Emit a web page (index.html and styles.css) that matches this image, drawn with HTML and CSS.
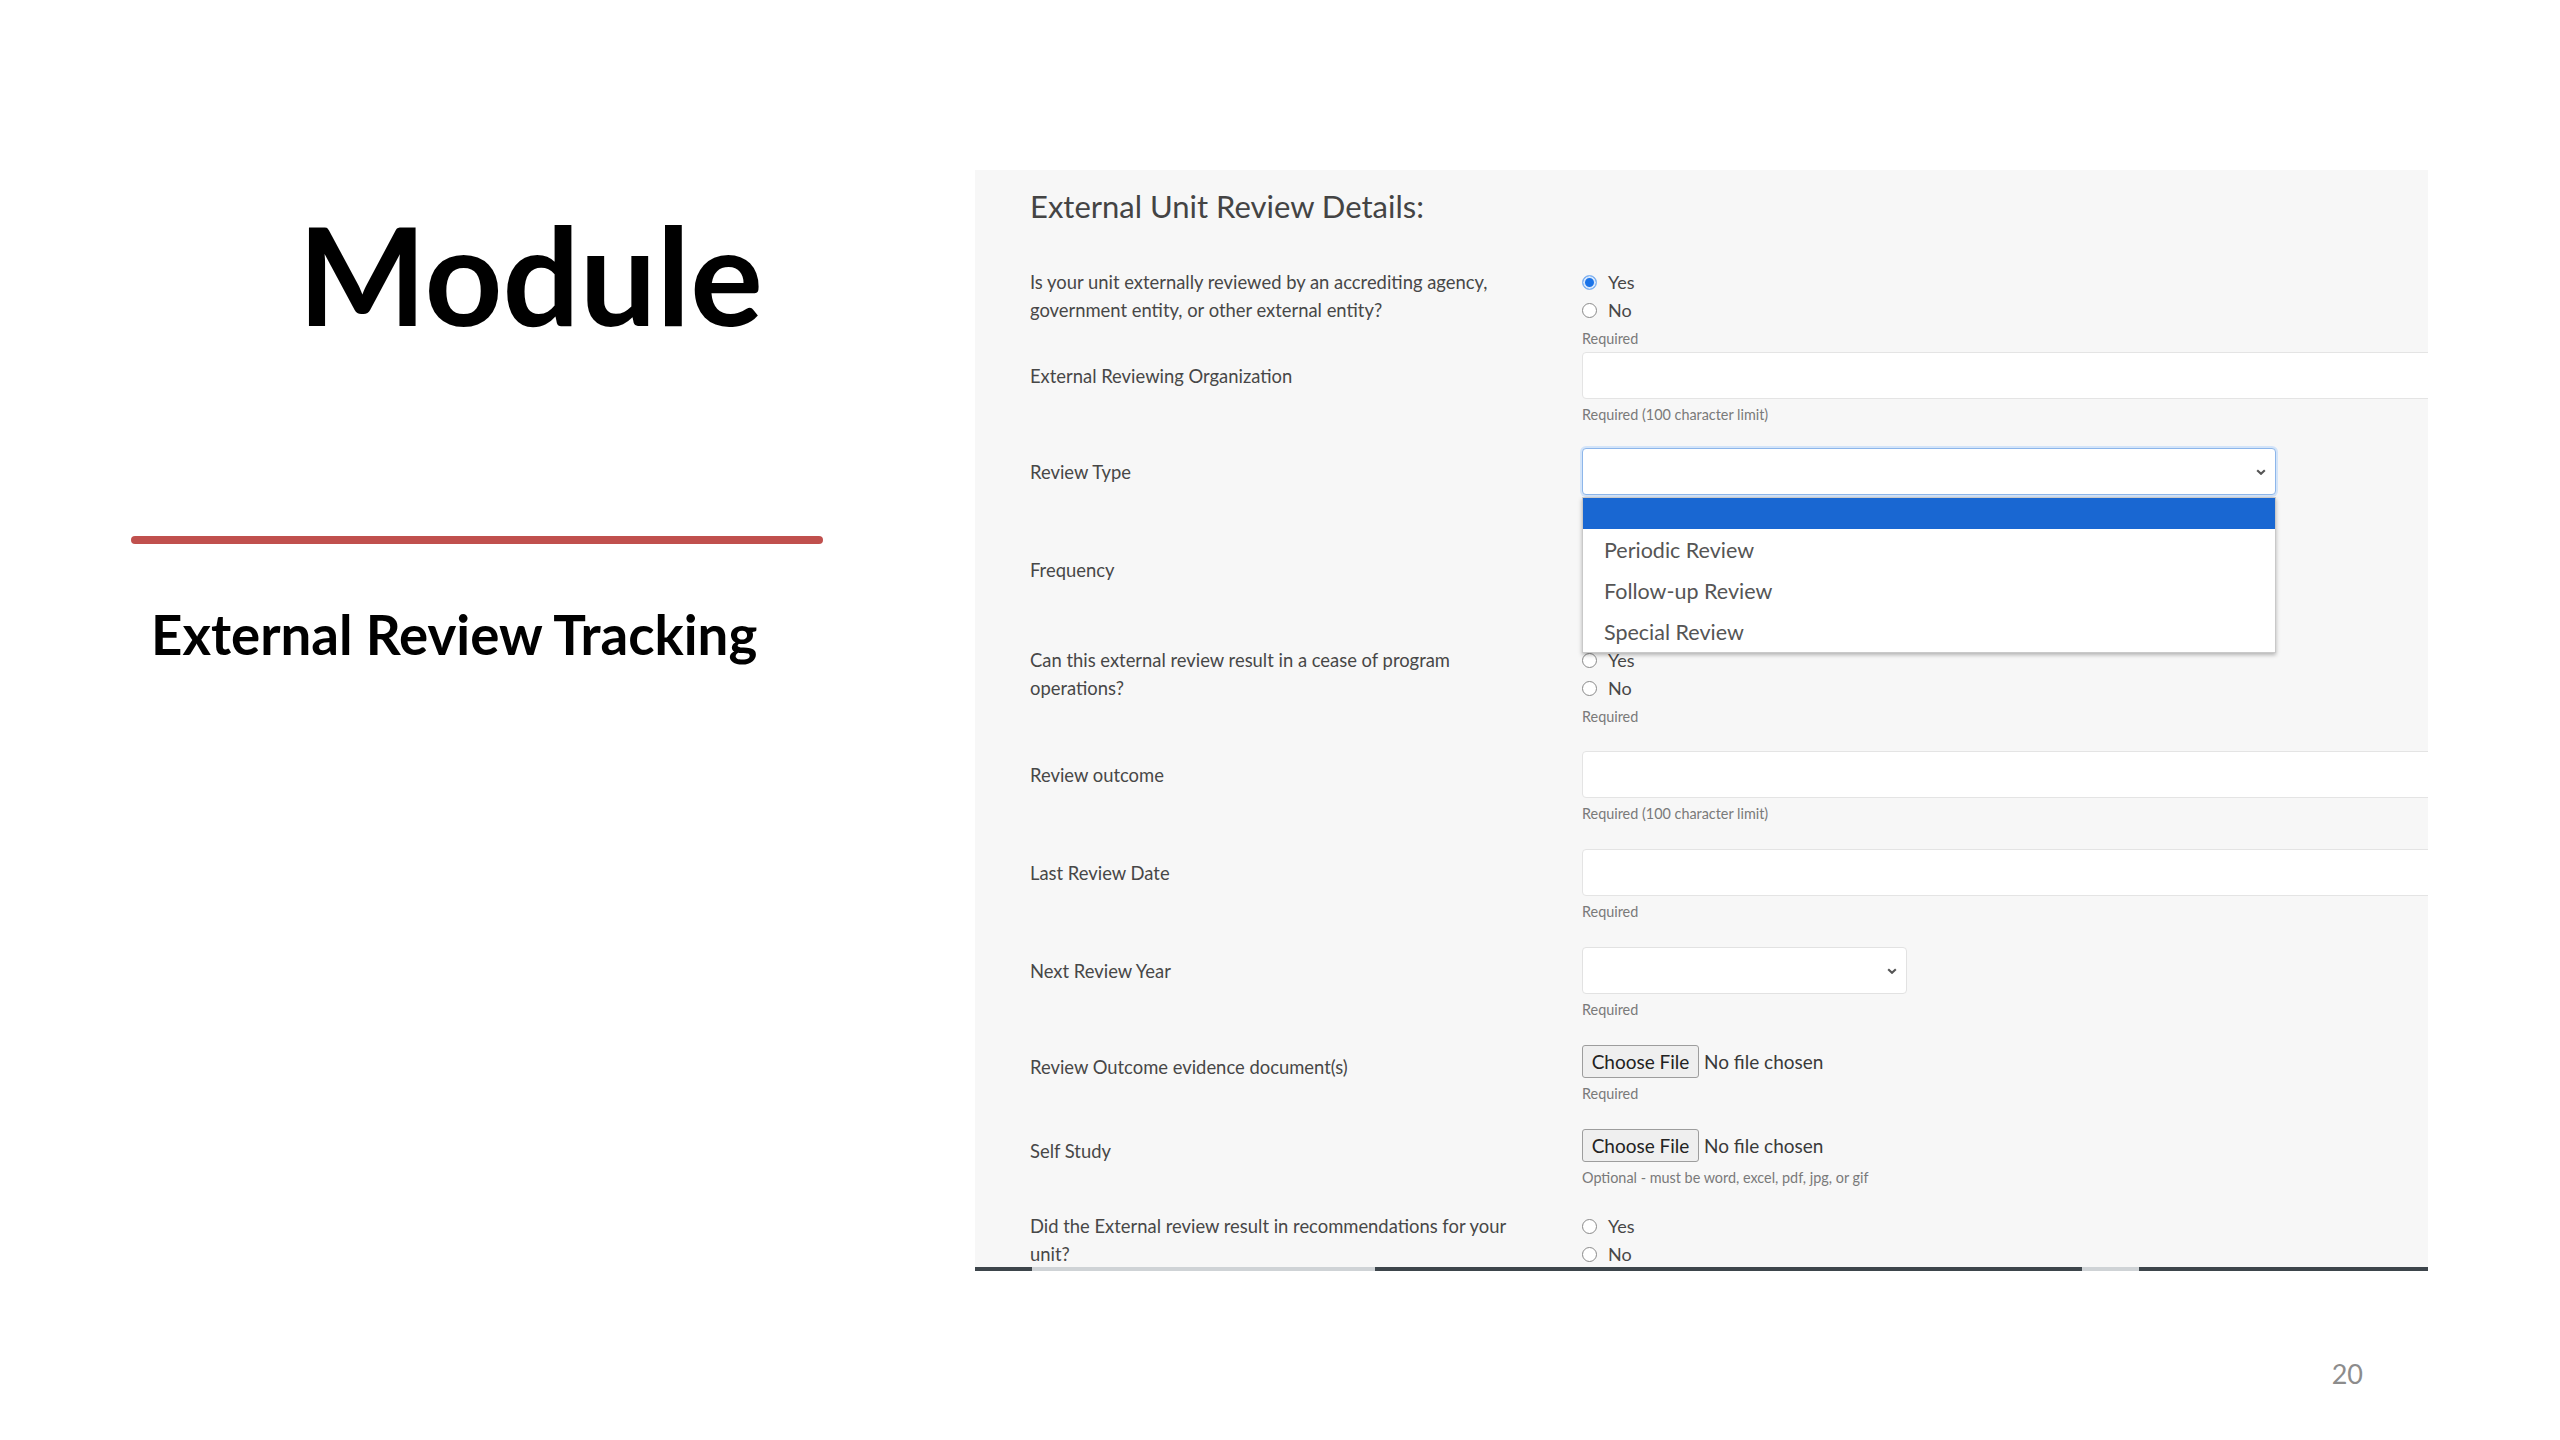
FILE: index.html
```html
<!DOCTYPE html>
<html lang="en">
<head>
<meta charset="utf-8">
<title>Module – External Review Tracking</title>
<link rel="stylesheet" href="styles.css">
</head>
<body>
<div class="slide">
  <div class="main">
    <section class="intro">
      <h1 class="module">Module</h1>
      <div class="rule"></div>
      <h2 class="subtitle">External Review Tracking</h2>
    </section>

    <section class="shot">
      <div class="panel">
        <h3 class="form-title">External Unit Review Details:</h3>

        <div class="row row-radio row-first">
          <div class="label">Is your unit externally reviewed by an accrediting agency,<br>government entity, or other external entity?</div>
          <div class="control">
            <div class="radio"><span class="dot on"></span>Yes</div>
            <div class="radio"><span class="dot"></span>No</div>
            <div class="hint hint-radio">Required</div>
          </div>
        </div>

        <div class="row row-org">
          <div class="label">External Reviewing Organization</div>
          <div class="control">
            <div class="input"></div>
            <div class="hint">Required (100 character limit)</div>
          </div>
        </div>

        <div class="row">
          <div class="label">Review Type</div>
          <div class="control">
            <div class="select focused">
              <svg class="chev" viewBox="0 0 10 6" width="10" height="6"><path d="M1.2 1.2l3.8 3.6 3.8-3.6" fill="none" stroke="#555" stroke-width="2.1"/></svg>
              <div class="dropdown">
                <div class="opt blank"></div>
                <div class="opt">Periodic Review</div>
                <div class="opt">Follow-up Review</div>
                <div class="opt">Special Review</div>
              </div>
            </div>
            <div class="hint">Required</div>
          </div>
        </div>

        <div class="row row-freq">
          <div class="label">Frequency</div>
          <div class="control">
            <div class="select">
              <svg class="chev" viewBox="0 0 10 6" width="10" height="6"><path d="M1.2 1.2l3.8 3.6 3.8-3.6" fill="none" stroke="#555" stroke-width="2.1"/></svg>
            </div>
            <div class="hint">Required</div>
          </div>
        </div>

        <div class="row row-radio">
          <div class="label">Can this external review result in a cease of program<br>operations?</div>
          <div class="control">
            <div class="radio"><span class="dot"></span>Yes</div>
            <div class="radio"><span class="dot"></span>No</div>
            <div class="hint hint-radio">Required</div>
          </div>
        </div>

        <div class="row">
          <div class="label">Review outcome</div>
          <div class="control">
            <div class="input"></div>
            <div class="hint">Required (100 character limit)</div>
          </div>
        </div>

        <div class="row">
          <div class="label">Last Review Date</div>
          <div class="control">
            <div class="input"></div>
            <div class="hint">Required</div>
          </div>
        </div>

        <div class="row">
          <div class="label">Next Review Year</div>
          <div class="control">
            <div class="select short">
              <svg class="chev" viewBox="0 0 10 6" width="10" height="6"><path d="M1.2 1.2l3.8 3.6 3.8-3.6" fill="none" stroke="#555" stroke-width="2.1"/></svg>
            </div>
            <div class="hint">Required</div>
          </div>
        </div>

        <div class="row row-file">
          <div class="label">Review Outcome evidence document(s)</div>
          <div class="control">
            <div class="file"><span class="btn">Choose File</span><span>No file chosen</span></div>
            <div class="hint">Required</div>
          </div>
        </div>

        <div class="row row-file row-self">
          <div class="label">Self Study</div>
          <div class="control">
            <div class="file"><span class="btn">Choose File</span><span>No file chosen</span></div>
            <div class="hint">Optional - must be word, excel, pdf, jpg, or gif</div>
          </div>
        </div>

        <div class="row row-radio row-last">
          <div class="label">Did the External review result in recommendations for your<br>unit?</div>
          <div class="control">
            <div class="radio"><span class="dot"></span>Yes</div>
            <div class="radio"><span class="dot"></span>No</div>
          </div>
        </div>
      </div>
      <div class="edge"></div>
    </section>
  </div>
  <footer class="page-num">20</footer>
</div>
</body>
</html>
```

FILE: styles.css
```css
* { box-sizing: border-box; }

html, body {
  margin: 0;
  padding: 0;
}

body {
  width: 2560px;
  height: 1440px;
  background: #ffffff;
  font-family: Lato, "Liberation Sans", sans-serif;
  overflow: hidden;
}

.slide {
  width: 2560px;
  height: 1440px;
  display: flex;
  flex-direction: column;
}

.main {
  display: flex;
  height: 1300px;
}

/* ---------- left side ---------- */
.intro {
  width: 975px;
  padding-top: 206px;
}

.module {
  margin: 0 0 0 298px;
  font-family: Lato, "Liberation Sans", sans-serif;
  font-weight: 700;
  font-size: 136px;
  line-height: 1;
  color: #000;
}

.rule {
  margin: 194px 0 0 131px;
  width: 692px;
  height: 8px;
  border-radius: 4px;
  background: #c0504d;
}

.subtitle {
  margin: 63px 0 0 151px;
  font-family: Lato, "Liberation Sans", sans-serif;
  font-weight: 700;
  font-size: 54.6px;
  line-height: 1;
  color: #000;
}

/* ---------- right side (form screenshot) ---------- */
.shot {
  width: 1453px;
  margin-top: 170px;
}

.panel {
  height: 1097px;
  background: #f7f7f7;
  overflow: hidden;
  padding: 16px 0 0 55px;
}

.edge {
  height: 4px;
  background: linear-gradient(to right,
    #3d454b 0 57px,
    #cfd3d6 57px 400px,
    #3d454b 400px 1107px,
    #cfd3d6 1107px 1164px,
    #3d454b 1164px);
}

.form-title {
  margin: 0 0 42px 0;
  font-weight: 400;
  font-size: 31px;
  line-height: 40px;
  color: #444;
}

.row {
  display: grid;
  grid-template-columns: 552px 1fr;
  margin-bottom: 27px;
}

.row-radio { margin-bottom: 26px; }
.row-self { margin-bottom: 26px; }
.row-org { margin-bottom: 25px; }
.row-freq { margin-bottom: 29px; }
.row-first { margin-bottom: 5px; }
.row-last { margin-bottom: 0; }

.label {
  font-size: 18.4px;
  line-height: 28px;
  color: #474747;
  padding-top: 10px;
}

.row-radio .label { padding-top: 0; }
.row-file .label { padding-top: 8px; }

.control {
  min-width: 0;
}

.input {
  height: 47px;
  width: 1000px;
  background: #fff;
  border: 1px solid #e4e4e4;
  border-radius: 4px;
}

.select {
  position: relative;
  height: 47px;
  width: 694px;
  background: #fff;
  border: 1px solid #e2e2e2;
  border-radius: 4px;
  display: flex;
  align-items: center;
  justify-content: flex-end;
  padding-right: 9px;
}

.select.short { width: 325px; }

.select.focused {
  border-color: #8db6ea;
  box-shadow: 0 0 0 2px #d3e4f9;
}

.chev { display: block; }

.dropdown {
  position: absolute;
  top: calc(100% + 3px);
  left: -1px;
  right: -1px;
  background: #fff;
  border: 1px solid #c9c9c9;
  box-shadow: 0 2px 4px rgba(0, 0, 0, 0.28);
  z-index: 5;
}

.opt {
  height: 41px;
  padding-left: 21px;
  display: flex;
  align-items: center;
  font-size: 21.5px;
  color: #555;
}

.opt.blank {
  height: 31px;
  background: #1967d2;
}

.hint {
  margin-top: 8px;
  font-size: 14.4px;
  line-height: 16px;
  color: #7a7a7a;
}

.hint-radio { margin-top: 7px; }

.radio {
  display: flex;
  align-items: center;
  gap: 11px;
  height: 28px;
  font-size: 18px;
  color: #474747;
}

.dot {
  width: 15px;
  height: 15px;
  border-radius: 50%;
  border: 1px solid #8a8a8a;
  background: #fff;
  flex: none;
}

.dot.on {
  border-color: #8fbcf2;
  background: #1a73e8;
  box-shadow: inset 0 0 0 2px #d6e6fb;
}

.file {
  display: flex;
  align-items: center;
  gap: 5px;
  height: 33px;
  font-size: 19px;
  color: #3a3a3a;
}

.btn {
  height: 33px;
  width: 117px;
  display: flex;
  align-items: center;
  justify-content: center;
  border: 1px solid #9d9d9d;
  border-radius: 3px;
  background: #efefef;
  color: #222;
}

/* ---------- footer ---------- */
.page-num {
  margin-top: 58px;
  padding-right: 197px;
  text-align: right;
  font-size: 27px;
  line-height: 32px;
  color: #8c8c8c;
}
```
